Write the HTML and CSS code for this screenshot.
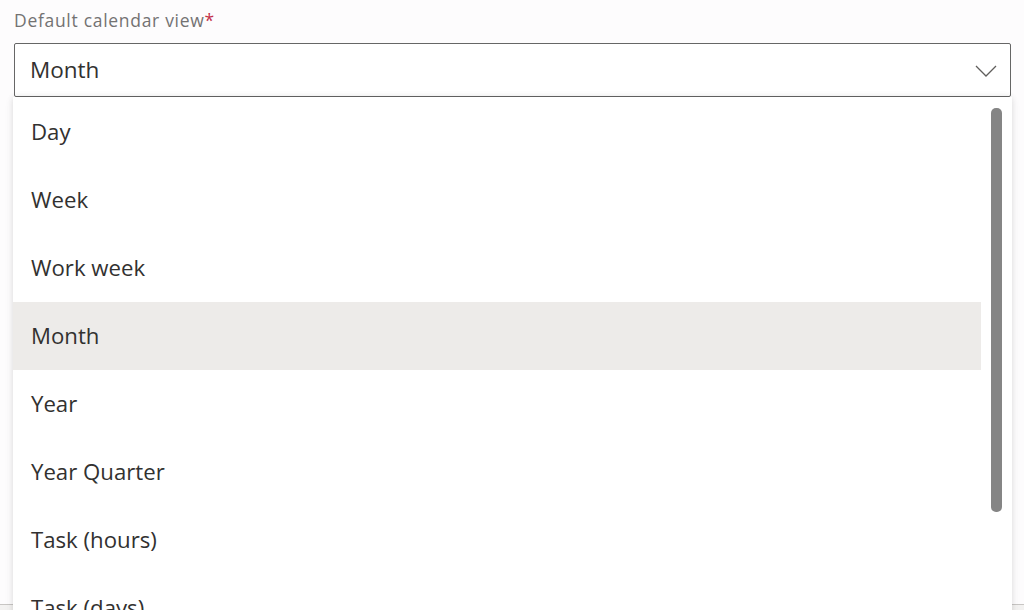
FILE: index.html
```html
<!DOCTYPE html>
<html>
<head>
<meta charset="utf-8">
<link rel="stylesheet" href="styles.css">
</head>
<body>
<div class="page">
  <div class="field">
    <div class="label">Default calendar view<span class="req">*</span></div>
    <div class="select">
      <span class="value">Month</span>
      <svg class="chev" width="22" height="14" viewBox="0 0 22 14"><path d="M1 2 L11 12 L21 2" fill="none" stroke="#605e5c" stroke-width="1.3"/></svg>
    </div>
  </div>
  <div class="spacer"></div>
  <div class="footer">
    <span class="sep"></span>
    <span class="btn-text">Save</span>
    <span class="sep"></span>
    <span class="btn-primary">Cancel</span>
  </div>
  <div class="dropdown">
    <ul class="options">
      <li class="opt">Day</li>
      <li class="opt">Week</li>
      <li class="opt">Work week</li>
      <li class="opt selected">Month</li>
      <li class="opt">Year</li>
      <li class="opt">Year Quarter</li>
      <li class="opt">Task (hours)</li>
      <li class="opt">Task (days)</li>
    </ul>
    <div class="scroll"><div class="thumb"></div></div>
  </div>
</div>
</body>
</html>
```
FILE: styles.css
```css
html, body {
  margin: 0;
  padding: 0;
  height: 610px;
  overflow: hidden;
  background: #fdfcfd;
  font-family: "Open Sans", "Noto Sans", sans-serif;
  color: #323130;
}
.page {
  position: relative;
  height: 610px;
  display: flex;
  flex-direction: column;
}
.field {
  padding: 8px 13px 0 14px;
}
.label {
  font-size: 17.5px;
  letter-spacing: 0.7px;
  color: #737272;
  line-height: 24px;
  height: 35px;
}
.req {
  color: #c4314b;
}
.select {
  height: 52px;
  border: 1px solid #666;
  border-radius: 2px;
  display: flex;
  align-items: center;
  justify-content: space-between;
  padding: 0 13px 0 15px;
  background: #fff;
}
.value {
  font-size: 22.5px;
  margin-top: -2px;
}
.chev {
  display: block;
  margin-top: 1px;
}
.spacer {
  flex: 1;
}
.footer {
  flex: 0 0 auto;
  height: 50px;
  margin-bottom: -46px;
  border-top: 1px solid #c8c6c4;
  background: #f3f2f1;
  display: flex;
  align-items: flex-start;
  justify-content: flex-end;
  gap: 40px;
  padding: 1px 48px 0 0;
}
.sep {
  width: 1px;
  height: 20px;
  background: #8a8886;
}
.btn-text {
  font-size: 16px;
  font-weight: 600;
  line-height: 14px;
  margin-top: -6px;
}
.btn-primary {
  background: #0f6cbd;
  color: #fff;
  width: 114px;
  height: 32px;
  text-align: center;
  font-size: 16px;
  font-weight: 600;
}
.dropdown {
  position: absolute;
  left: 13px;
  top: 97px;
  width: 999px;
  height: 520px;
  background: #fff;
  box-shadow: 0 0 6px rgba(0, 0, 0, 0.10), 0 2px 10px rgba(0, 0, 0, 0.06);
  display: flex;
}
.options {
  list-style: none;
  margin: 0;
  padding: 1px 0 0 0;
  width: 968px;
}
.opt {
  height: 68px;
  display: flex;
  align-items: center;
  padding: 0 0 2px 18px;
  box-sizing: border-box;
  font-size: 22.2px;
}
.selected {
  background: #edebe9;
}
.scroll {
  flex: 1;
  padding: 11px 0 0 10px;
}
.thumb {
  width: 11px;
  height: 404px;
  border-radius: 5px;
  background: #858585;
}
```
